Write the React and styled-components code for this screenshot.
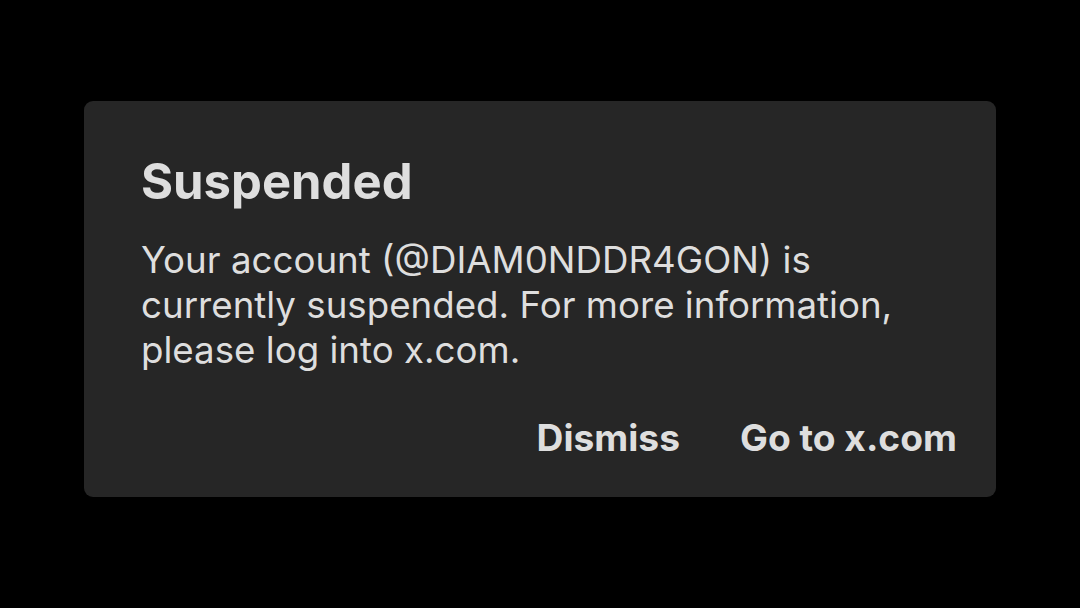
import React from "react";
import styled, { createGlobalStyle } from "styled-components";

const Global = createGlobalStyle`
  html, body { margin: 0; padding: 0; background: #000; }
  body { font-family: Inter, "Noto Sans", sans-serif; width: 1080px; height: 608px; overflow: hidden; }
`;

const Screen = styled.div`
  width: 1080px;
  height: 608px;
  background: #000;
  display: flex;
  align-items: flex-start;
  justify-content: flex-start;
  padding: 101px 0 0 84px;
  box-sizing: border-box;
`;

const Dialog = styled.div`
  width: 912px;
  height: 396px;
  box-sizing: border-box;
  background: #262626;
  border-radius: 9px;
  padding: 51px 39px 36px 57px;
  display: flex;
  flex-direction: column;
  color: #dedede;
`;

const Title = styled.h2`
  margin: 0;
  font-size: 49px;
  line-height: 60px;
  font-weight: 700;
  letter-spacing: 0;
`;

const Message = styled.p`
  margin: 25px 0 0;
  font-size: 36.7px;
  line-height: 45px;
  font-weight: 400;
  max-width: 780px;
`;

const Actions = styled.div`
  margin-top: auto;
  display: flex;
  justify-content: flex-end;
  gap: 60px;
`;

const Action = styled.button`
  background: none;
  border: none;
  padding: 0;
  font-family: inherit;
  font-size: 37.2px;
  line-height: 46px;
  font-weight: 700;
  color: #dedede;
  cursor: pointer;
`;

export default function App() {
  return (
    <>
      <Global />
      <Screen>
        <Dialog>
          <Title>Suspended</Title>
          <Message>
            Your account (@DIAM0NDDR4GON) is currently suspended. For more information, please log into x.com.
          </Message>
          <Actions>
            <Action>Dismiss</Action>
            <Action>Go to x.com</Action>
          </Actions>
        </Dialog>
      </Screen>
    </>
  );
}
